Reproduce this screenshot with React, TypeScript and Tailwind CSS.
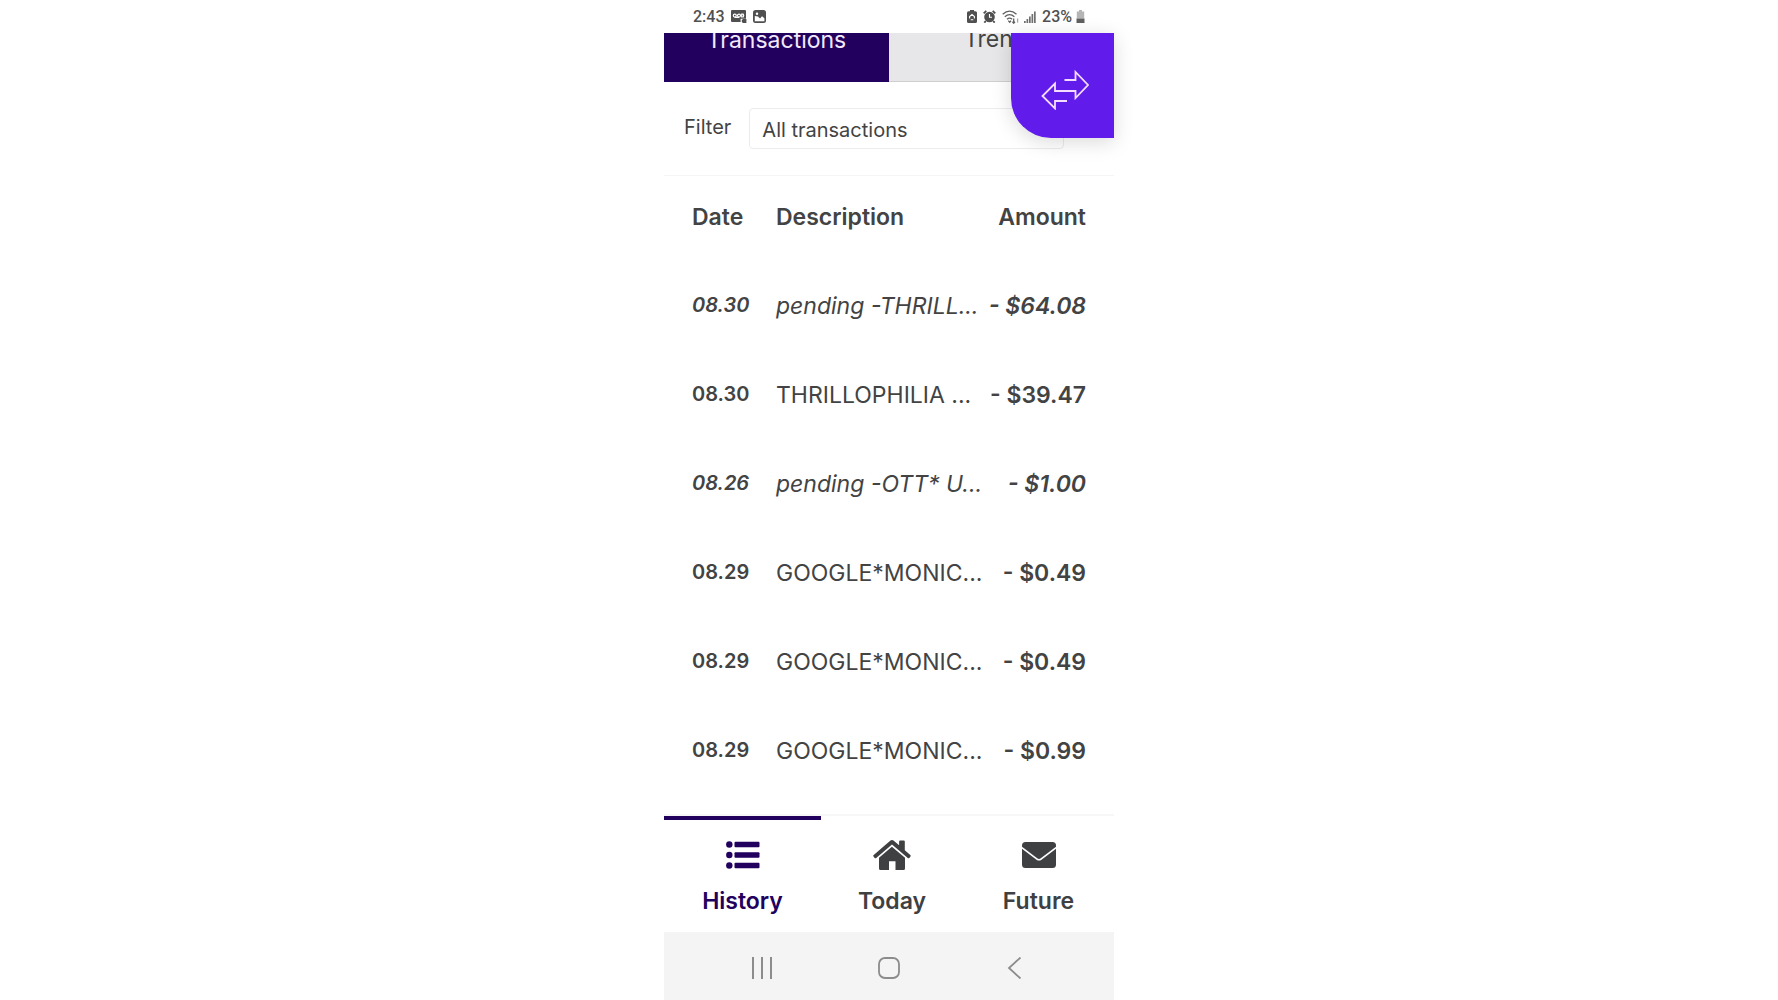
import { useState } from "react";
import type { ReactNode } from "react";
import clsx from "clsx";

interface Transaction {
  date: string;
  description: string;
  amount: string;
  pending?: boolean;
}

const transactions: Transaction[] = [
  { date: "08.30", description: "pending -THRILL...", amount: "- $64.08", pending: true },
  { date: "08.30", description: "THRILLOPHILIA ...", amount: "- $39.47" },
  { date: "08.26", description: "pending -OTT* U...", amount: "- $1.00", pending: true },
  { date: "08.29", description: "GOOGLE*MONIC...", amount: "- $0.49" },
  { date: "08.29", description: "GOOGLE*MONIC...", amount: "- $0.49" },
  { date: "08.29", description: "GOOGLE*MONIC...", amount: "- $0.99" },
];

function StatusBar() {
  return (
    <div className="flex h-[33px] items-center justify-between px-[29px] font-[Roboto,sans-serif] text-base font-medium text-[#505050]">
      <div className="flex items-center gap-1.5">
        <span>2:43</span>
        <svg width="16" height="13" viewBox="0 0 16 13" aria-hidden="true">
          <rect width="15" height="12" rx="1" fill="#505050" />
          <g fill="none" stroke="#fff" strokeWidth="1.2">
            <circle cx="3.8" cy="5.6" r="1.5" />
            <circle cx="8" cy="5.6" r="1.5" />
            <path d="M3.8 7.3H8M10.7 3.5v4M10.7 4.2h1.5q1 1.4 0 2.8h-1.5M10.2 13V9.3h5.8" />
          </g>
          <rect x="11.4" y="9" width="4" height="4" fill="#505050" />
        </svg>
        <svg width="13" height="13" viewBox="0 0 13 13" aria-hidden="true">
          <rect width="13" height="13" rx="2.5" fill="#505050" />
          <path d="M1.8 10.2V6L5 6.6l2 1.9 2-2.3 2.4 2v3H1.8z" fill="#fff" />
          <circle cx="4" cy="3.7" r="1.2" fill="#fff" />
        </svg>
      </div>
      <div className="flex items-center gap-1">
        <div className="flex items-center gap-1.5">
          <svg width="10" height="13" viewBox="0 0 10 13" aria-hidden="true">
            <path d="M3 0h4v1.2h1.5Q10 1.2 10 2.7v8.8Q10 13 8.5 13h-7Q0 13 0 11.5V2.7q0-1.5 1.5-1.5H3z" fill="#505050" />
            <path d="M2.6 8.5V6.6L5 4.4l2.4 2.2v1.9M3.7 9.7h2.6" fill="none" stroke="#fff" strokeWidth="1.1" />
          </svg>
          <svg width="13" height="13" viewBox="0 0 13 13" aria-hidden="true">
            <circle cx="6.5" cy="7" r="5.3" fill="#505050" />
            <path d="M.7 3.3 3.3.8M12.3 3.3 9.700.8M2.8 11 1.3 12.7M10.2 11l1.5 1.7" stroke="#505050" strokeWidth="1.8" />
            <path d="M6.5 4v3.3H9" fill="none" stroke="#fff" strokeWidth="1.1" />
          </svg>
          <svg width="18" height="14" viewBox="0 0 18 14" fill="none" stroke="#606060" strokeWidth="1.3" aria-hidden="true">
            <path d="M.7 4.2Q7.5-2 14.5 4.2M2.8 6.8Q7.6 2.5 12.4 6.8M5 9.2Q7.6 7 10.2 9.2" />
            <path d="m6.3 10.6 1.4 1.6 1.3-1.5M11.700 8.500v4.700m-1.300-1.400 1.300 1.400 1.300-1.400" />
            <path d="M15.6 12.6V8.5" stroke="#a5a5a5" />
          </svg>
        </div>
        <svg width="12" height="12" viewBox="0 0 12 12" fill="#707070" aria-hidden="true">
          <path d="M0 10h1.7v2H0zM2.5 8h1.7v4H2.5zM5 5.5h1.7V12H5zM7.5 3h1.7v9H7.5zM10 .5h1.7V12H10z" />
        </svg>
        <span className="ml-0.5">23%</span>
        <svg width="9" height="13" viewBox="0 0 9 13" aria-hidden="true">
          <path d="M3 0h3v1.4h2.2v7.1H.8V1.4H3z" fill="#b5b5b5" />
          <path d="M.5 8.5h8V13h-8z" fill="#606060" />
        </svg>
      </div>
    </div>
  );
}

function TransactionTable() {
  return (
    <table className="w-full table-fixed text-left text-[23px]">
      <thead>
        <tr className="h-[89px]">
          <th scope="col" className="w-28 pb-1.5 pl-7 font-semibold">Date</th>
          <th scope="col" className="pb-1.5 font-semibold">Description</th>
          <th scope="col" className="w-32 pb-1.5 pr-7 text-right font-semibold">Amount</th>
        </tr>
      </thead>
      <tbody>
        {transactions.map((t, i) => (
          <tr key={i} className={clsx("h-[89px]", t.pending && "italic")}>
            <td className="pb-2.5 pl-7 text-xl font-semibold">{t.date}</td>
            <td className="whitespace-nowrap pb-1.5">{t.description}</td>
            <td className="whitespace-nowrap pb-1.5 pr-7 text-right font-semibold">{t.amount}</td>
          </tr>
        ))}
      </tbody>
    </table>
  );
}

const navItems: { label: string; icon: ReactNode }[] = [
  {
    label: "History",
    icon: (
      <svg width="34" height="30" viewBox="0 0 34 30" fill="currentColor" aria-hidden="true">
        <circle cx="3.3" cy="4.5" r="3.2" />
        <circle cx="3.3" cy="15" r="3.2" />
        <circle cx="3.3" cy="25.5" r="3.2" />
        <rect x="8.5" y="1.7" width="25" height="5.6" rx="1" />
        <rect x="8.5" y="12.2" width="25" height="5.6" rx="1" />
        <rect x="8.5" y="22.7" width="25" height="5.6" rx="1" />
      </svg>
    ),
  },
  {
    label: "Today",
    icon: (
      <svg width="38" height="30" viewBox="0 0 38 30" fill="currentColor" aria-hidden="true">
        <path d="M18.9 6.7 32 17.7V28.500q0 1.500-1.500 1.500H22.500v-8.800h-6.500V30H7.500Q6 30 6 28.500V17.700z" />
        <path d="M17.2.7q1.8-1.400 3.600 0l5.300 4.500V1.500q0-1 1-1h3.700q1 0 1 1v8.800l5.500 4.700q.8.700.2 1.400l-1.200 1.500q-.7.700-1.500.1L19 4.500 3.200 18q-.8.600-1.500-.1L.5 16.400q-.6-.8.2-1.400z" />
      </svg>
    ),
  },
  {
    label: "Future",
    icon: (
      <svg width="34" height="30" viewBox="0 0 34 30" fill="currentColor" aria-hidden="true">
        <path d="M3.5 2h27Q34 2 34 5.500v1.200L18.800 18.300q-1.800 1.300-3.600 0L0 6.700V5.500Q0 2 3.500 2z" />
        <path d="M0 8.700 14.500 19.700q2.500 1.700 5 0L34 8.700V24.500q0 3.500-3.500 3.500h-27Q0 28 0 24.500z" />
      </svg>
    ),
  },
];

function BottomNav() {
  const [active, setActive] = useState("History");

  return (
    <nav className="grid grid-cols-[157fr_142fr_151fr] border-t-2 border-[#f7f7f7]">
      {navItems.map(({ label, icon }) => (
        <button
          key={label}
          onClick={() => setActive(label)}
          className={clsx(
            "flex h-[116px] flex-col items-center gap-3.5 border-t-4 pt-5 text-[23px] font-semibold",
            active === label ? "border-[#22005e] text-[#22005e]" : "border-transparent text-[#3f4042]"
          )}
        >
          {icon}
          {label}
        </button>
      ))}
    </nav>
  );
}

function SystemBar() {
  return (
    <div className="flex h-[68px] items-center justify-between bg-[#f4f4f4] px-[88px] pt-1 text-[#8c8c8c]">
      <button aria-label="Recent apps">
        <svg width="22" height="22" viewBox="0 0 22 22" stroke="currentColor" strokeWidth="2">
          <path d="M1 0v22M10 0v22M19 0v22" />
        </svg>
      </button>
      <button aria-label="Home">
        <svg width="22" height="22" viewBox="0 0 22 22" fill="none" stroke="currentColor" strokeWidth="1.8">
          <rect x="1" y="1" width="20" height="20" rx="6" />
        </svg>
      </button>
      <button aria-label="Back">
        <svg width="22" height="22" viewBox="0 0 22 22" fill="none" stroke="currentColor" strokeWidth="1.8">
          <path d="M16.500.5 5 11 16.500 21.500" />
        </svg>
      </button>
    </div>
  );
}

export default function App() {
  return (
    <div className="min-h-screen bg-white font-[Inter,sans-serif] text-[#434343]">
      <div className="mx-auto flex min-h-screen w-full max-w-[450px] flex-col">
        <StatusBar />
        <main className="relative flex-1">
          <div className="flex h-[49px] items-end overflow-hidden text-[23px]">
            <button className="h-[84px] flex-1 bg-[#22005e] text-[#f3e9fb]">Transactions</button>
            <button className="h-[84px] flex-1 border-b border-[#cfcfcf] bg-[#e7e7e9]">Trends</button>
          </div>

          <div className="flex items-start gap-[18px] border-b border-[#f5f5f5] py-[26px] pl-5 pr-[50px] text-xl">
            <label htmlFor="filter" className="leading-[38px]">Filter</label>
            <select
              id="filter"
              className="h-[41px] min-w-0 flex-1 appearance-none rounded border border-[#ececec] bg-white px-3 pt-0.5"
            >
              <option>All transactions</option>
            </select>
          </div>

          <TransactionTable />

          <button
            aria-label="Transfer"
            className="absolute right-0 top-0 flex h-[105px] w-[103px] items-center justify-center rounded-bl-[40px] bg-[#611ceb] pl-1 pt-2 text-[#f4dcff] shadow-[0_4px_20px_rgba(0,0,0,0.15)]"
          >
            <svg width="48" height="40" viewBox="0 0 48 40" fill="none" stroke="currentColor" strokeWidth="1.8">
              <path d="M23.500 10h11V2l12.500 13-12.500 13v-7H14v-7.500L1.500 26 14 38.500V31h12" />
            </svg>
          </button>
        </main>
        <BottomNav />
        <SystemBar />
      </div>
    </div>
  );
}
